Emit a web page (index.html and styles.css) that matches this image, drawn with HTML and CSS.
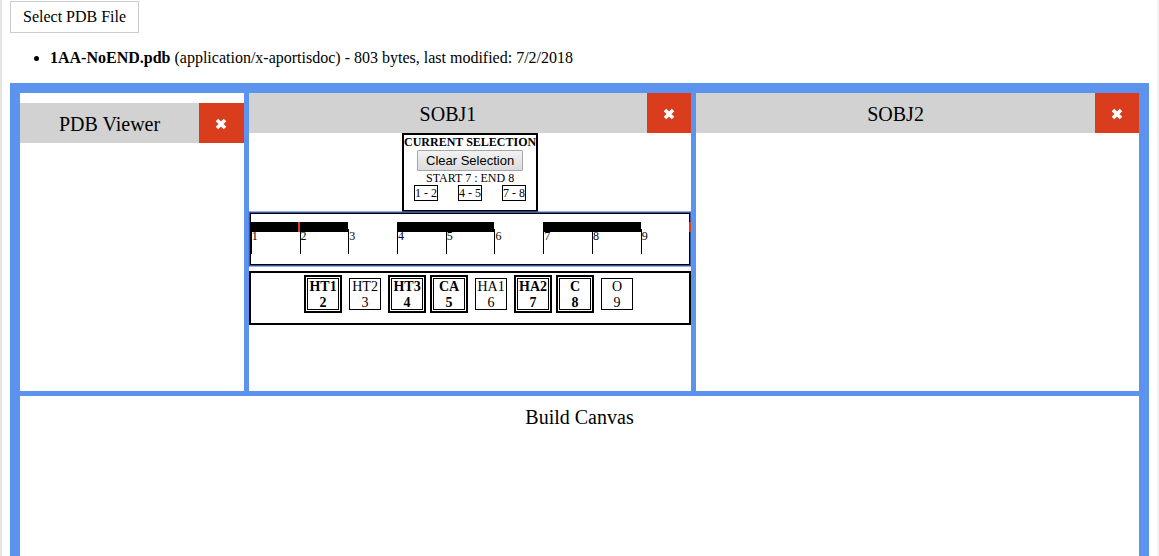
FILE: index.html
```html
<!DOCTYPE html>
<html lang="en">
<head>
<meta charset="utf-8">
<title>PDB Viewer</title>
<link rel="stylesheet" href="styles.css">
</head>
<body>
<main class="page">
  <button class="select-file" type="button">Select PDB File</button>
  <ul class="files">
    <li><strong>1AA-NoEND.pdb</strong> (application/x-aportisdoc) - 803 bytes, last modified: 7/2/2018</li>
  </ul>
  <div class="frame">
    <div class="panels">
      <section class="panel panel-viewer">
        <header class="bar">
          <h2 class="title">PDB Viewer</h2>
          <button class="close" type="button" aria-label="Close PDB Viewer"><svg class="cross" viewBox="0 0 12 12"><path d="M2 2 10 10M10 2 2 10"/></svg></button>
        </header>
      </section>
      <section class="panel">
        <header class="bar">
          <h2 class="title">SOBJ1</h2>
          <button class="close" type="button" aria-label="Close SOBJ1"><svg class="cross" viewBox="0 0 12 12"><path d="M2 2 10 10M10 2 2 10"/></svg></button>
        </header>
        <div class="selection">
          <h3 class="selection-title">CURRENT SELECTION</h3>
          <button class="clear" type="button">Clear Selection</button>
          <div class="range">START 7 : END 8</div>
          <div class="chips">
            <span class="chip">1 - 2</span>
            <span class="chip">4 - 5</span>
            <span class="chip">7 - 8</span>
          </div>
        </div>
        <div class="timeline">
          <div class="track">
            <span class="tick on">1</span>
            <span class="tick on">2</span>
            <span class="tick">3</span>
            <span class="tick on">4</span>
            <span class="tick on">5</span>
            <span class="tick">6</span>
            <span class="tick on">7</span>
            <span class="tick on">8</span>
            <span class="tick">9</span>
            <i class="marker marker-start"></i>
            <i class="marker marker-end"></i>
          </div>
        </div>
        <div class="atoms">
          <div class="atom picked">HT1<br>2</div>
          <div class="atom">HT2<br>3</div>
          <div class="atom picked">HT3<br>4</div>
          <div class="atom picked">CA<br>5</div>
          <div class="atom">HA1<br>6</div>
          <div class="atom picked">HA2<br>7</div>
          <div class="atom picked">C<br>8</div>
          <div class="atom">O<br>9</div>
        </div>
      </section>
      <section class="panel">
        <header class="bar">
          <h2 class="title">SOBJ2</h2>
          <button class="close" type="button" aria-label="Close SOBJ2"><svg class="cross" viewBox="0 0 12 12"><path d="M2 2 10 10M10 2 2 10"/></svg></button>
        </header>
      </section>
    </div>
    <section class="canvas">
      <h2 class="title">Build Canvas</h2>
    </section>
  </div>
</main>
</body>
</html>
```

FILE: styles.css
```css
* { box-sizing: border-box; }

html, body { height: 100%; }

body {
  margin: 0;
  background: #fff;
  color: #000;
  font-family: "Liberation Serif", "Times New Roman", serif;
  font-size: 16px;
  overflow: hidden;
}

.page {
  display: flex;
  flex-direction: column;
  align-items: stretch;
  min-height: 100%;
  padding: 1px 8px 0;
  border-left: 2px solid #e4e4e4;
  border-right: 2px solid #f2f2f2;
}

.select-file {
  align-self: flex-start;
  height: 32px;
  padding: 0 12px;
  border: 1px solid #ccc;
  background: #fff;
  color: inherit;
  font: inherit;
}

.files {
  margin: 16px 0;
  padding-left: 40px;
  line-height: 18px;
}

.frame {
  display: flex;
  flex: 1;
  flex-direction: column;
  border: 10px solid #5b93ef;
  border-bottom: 0;
}

.panels {
  display: grid;
  grid-template-columns: 20% 40% 40%;
  min-height: 298px;
}

.panel {
  min-width: 0;
  border-left: 5px solid #5b93ef;
}

.panel-viewer {
  padding-top: 10px;
  border-left: 0;
}

.bar {
  display: flex;
  height: 40px;
  background: #d2d2d2;
}

.title {
  flex: 1;
  margin: 0;
  font-size: 20px;
  font-weight: normal;
  line-height: 42px;
  text-align: center;
}

.close {
  display: flex;
  align-items: center;
  justify-content: center;
  width: 10%;
  padding: 1px 0 0;
  border: 0;
  background: #da3d1e;
}

.panel-viewer .close { width: 20%; }

.cross {
  width: 12px;
  height: 12px;
  fill: none;
  stroke: #fff;
  stroke-width: 3.6;
}

.selection {
  display: flex;
  flex-direction: column;
  align-items: center;
  width: 136px;
  height: 79px;
  margin: 0 auto;
  border: 2px solid #000;
  font-size: 12px;
  line-height: 14px;
}

.selection-title {
  margin: 0;
  font-size: 12px;
  line-height: 15px;
  white-space: nowrap;
}

.clear {
  height: 21px;
  padding: 0 8px;
  border: 1px solid #a6a6a6;
  border-radius: 1px;
  background: linear-gradient(#f2f2f2, #dcdcdc);
  color: #000;
  font-family: "Liberation Sans", Arial, sans-serif;
  font-size: 13px;
}

.chips {
  display: flex;
  gap: 20px;
}

.chip {
  width: 24px;
  height: 16px;
  border: 1px solid #000;
  text-align: center;
  white-space: nowrap;
}

.timeline {
  height: 52px;
  margin: 1px 1px 6px;
  padding-top: 8px;
  border: 1px solid #000;
  box-shadow: 0 0 0 1px #38559d, 0 0 0 2px rgba(77, 124, 230, 0.6);
}

.track {
  display: grid;
  grid-template-columns: repeat(9, 1fr);
  position: relative;
}

.tick {
  height: 32px;
  padding: 6px 0 0 1px;
  background-image: linear-gradient(#000, #000), linear-gradient(#000, #000);
  background-position: 0 7px, 0 0;
  background-repeat: no-repeat;
  background-size: 1px 25px, 0 0;
  font-size: 12px;
  line-height: 16px;
}

.tick.on {
  background-size: 1px 25px, 100% 10px;
}

.marker {
  position: absolute;
  top: 0;
  width: 2px;
  height: 10px;
  background: #da3d1e;
}

.marker-start { left: 10.8%; }

.marker-end { right: -2px; }

.atoms {
  display: flex;
  align-items: flex-start;
  justify-content: center;
  gap: 10px;
  height: 54px;
  padding-top: 5px;
  border: 2px solid #000;
  font-size: 14px;
  line-height: 16px;
  text-align: center;
}

.atom {
  width: 32px;
  height: 32px;
  border: 1px solid #000;
}

.atom.picked {
  box-shadow: 0 0 0 1px #fff, 0 0 0 3px #000;
  font-weight: bold;
}

.canvas {
  flex: 1;
  border-top: 5px solid #5b93ef;
}
```
